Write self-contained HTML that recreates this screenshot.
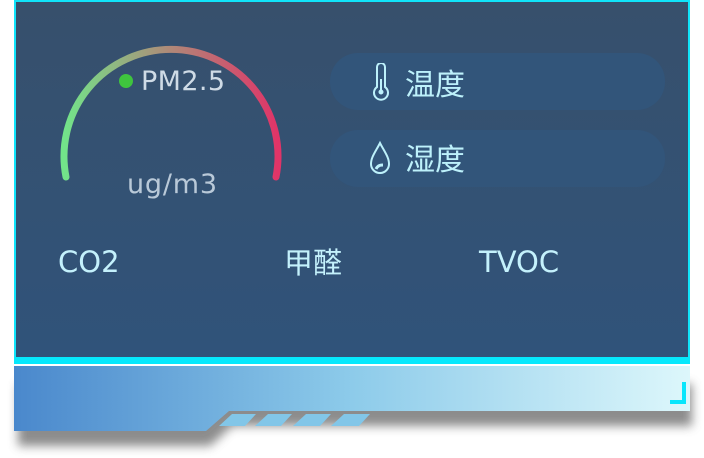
<!DOCTYPE html>
<html><head><meta charset="utf-8"><style>
*{margin:0;padding:0;box-sizing:border-box}
body{width:704px;height:458px;background:#fff;position:relative;overflow:hidden;font-family:"Liberation Sans","DejaVu Sans","Noto Sans CJK SC",sans-serif}
.panel{position:absolute;left:14px;top:0;width:676px;height:359px;border:2px solid #10e4fa;background:linear-gradient(#37506c,#30537a)}
.cbar{position:absolute;left:14px;top:357px;width:676px;height:7px;background:#06e8fc}
.pill{position:absolute;left:330px;width:335px;height:57px;border-radius:28px;background:#32557a;color:#bdf1fb;font-size:30px;font-family:"Noto Sans CJK SC",sans-serif}
.t{position:absolute;color:#c4f1fc;font-size:29px;top:245px;font-family:"DejaVu Sans","Noto Sans CJK SC",sans-serif}
</style></head><body>
<svg style="position:absolute;left:0;top:360px" width="704" height="98">
<defs><linearGradient id="g" x1="0" x2="1"><stop offset="0" stop-color="#4a88cc"/><stop offset=".5" stop-color="#8dcbea"/><stop offset="1" stop-color="#ddf7fb"/></linearGradient>
<filter id="s" x="-5%" y="-20%" width="110%" height="160%"><feGaussianBlur stdDeviation="5"/></filter></defs>
<path d="M18 16H692V58H232L210 78H18Z" fill="#666" opacity=".75" filter="url(#s)" transform="translate(0,8)"/>
<path d="M14 6H690V51H229L206 71H14Z" fill="url(#g)"/>
<g fill="#82c6e8"><path d="M232 54H256L245 66H219Z"/><path d="M268 54H292L281 66H255Z"/><path d="M306 54H331L320 66H293Z"/><path d="M344 54H370L359 66H331Z"/></g>
<path d="M684 22V42H670" stroke="#08e6fc" stroke-width="4" fill="none"/>
</svg>
<div class="panel"></div>
<div class="cbar"></div>
<svg style="position:absolute;left:0;top:0" width="330" height="220">
<defs><linearGradient id="a" x1="0" x2="1"><stop offset="0" stop-color="#72e48a"/><stop offset=".5" stop-color="#b08878"/><stop offset="1" stop-color="#e03468"/></linearGradient></defs>
<path d="M66 177 A107 107 0 1 1 276 177" stroke="url(#a)" stroke-width="7" fill="none" stroke-linecap="round"/>
<circle cx="126" cy="81" r="7" fill="#3fc43e"/>
<text x="141" y="90" fill="#cfdbe6" font-size="27" textLength="84" font-family="DejaVu Sans">PM2.5</text>
<text x="127" y="193" fill="#b9c9d8" font-size="27" textLength="90" font-family="DejaVu Sans">ug/m3</text>
</svg>
<div class="pill" style="top:53px"><svg style="position:absolute;left:40px;top:10px" width="22" height="38" viewBox="0 0 22 38" fill="none" stroke="#bdf1fb" stroke-width="2"><path d="M7 4a4 4 0 0 1 8 0v20a7 7 0 1 1-8 0Z"/><path d="M11 16v13"/><circle cx="11" cy="29" r="1.5" fill="#bdf1fb"/></svg><span style="position:absolute;left:75px;top:7px">温度</span></div>
<div class="pill" style="top:130px"><svg style="position:absolute;left:38px;top:10px" width="24" height="36" viewBox="0 0 24 36" fill="none" stroke="#bdf1fb" stroke-width="2"><path d="M12 3C8 11 3 17 3 24a9 9 0 0 0 18 0c0-7-5-13-9-21Z"/><path d="M8 29c2-4 5-4 7-4" stroke-width="3"/></svg><span style="position:absolute;left:75px;top:5px">湿度</span></div>
<div class="t" style="left:58px">CO2</div>
<div class="t" style="left:284px;top:240px">甲醛</div>
<div class="t" style="left:479px">TVOC</div>
</body></html>
